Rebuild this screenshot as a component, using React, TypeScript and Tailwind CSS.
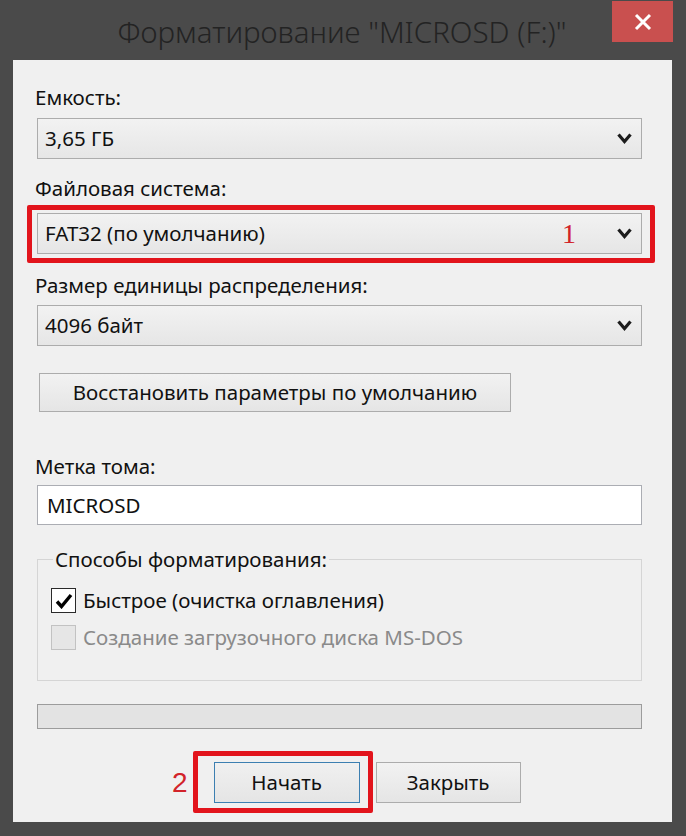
import { type ReactNode } from "react";

const font = { fontFamily: '"Noto Sans", "Open Sans", sans-serif' };

function Chevron() {
  return (
    <svg width="15" height="11" viewBox="0 0 15 11" className="shrink-0">
      <path d="M1.5 1.5 L7.5 8.5 L13.5 1.5" fill="none" stroke="#1c1c1c" strokeWidth="3.2" strokeLinejoin="miter" />
    </svg>
  );
}

function Combo({ value, children }: { value: string; children?: ReactNode }) {
  return (
    <div className="flex h-[41px] w-[605px] items-center border border-[#acacac] bg-gradient-to-b from-[#f2f2f2] to-[#e6e6e6] pl-[7px] pr-[9px]">
      <span className="flex-1 text-[20.5px] text-[#111]">{value}</span>
      {children}
      <Chevron />
    </div>
  );
}

function Label({ text, className = "" }: { text: string; className?: string }) {
  return <div className={`h-[24px] text-[20.5px] leading-[24px] text-[#111] ${className}`}>{text}</div>;
}

export default function App() {
  return (
    <div className="flex h-[836px] w-[686px] flex-col bg-[#4a4a4a]" style={font}>
      {/* Title bar */}
      <div className="flex h-[60px] items-start">
        <div className="flex h-[58px] flex-1 items-center justify-center pl-[72px] pt-[6px] text-[29.5px] font-light text-[#232323]">
          Форматирование "MICROSD (F:)"
        </div>
        <button className="mr-[13px] mt-[1px] flex h-[41px] w-[61px] items-center justify-center bg-[#c9504f]">
          <svg width="18" height="18" viewBox="0 0 18 18">
            <path d="M2 2 L16 16 M16 2 L2 16" stroke="#fff" strokeWidth="3" />
          </svg>
        </button>
      </div>

      {/* Client area */}
      <div className="mx-[13px] flex h-[762px] w-[659px] flex-col bg-[#f0f0f0] pl-[24px]">
        <Label text="Емкость:" className="mt-[25px] -ml-[2px]" />
        <div className="mt-[9px]">
          <Combo value="3,65 ГБ" />
        </div>

        <Label text="Файловая система:" className="mt-[17px] -ml-[2px]" />
        <div className="relative mt-[13px] w-[605px]">
          <Combo value="FAT32 (по умолчанию)">
            <span className="mr-[41px] text-[28px] leading-none text-[#d2232a]" style={{ fontFamily: '"Liberation Serif", serif' }}>
              1
            </span>
          </Combo>
          <div className="pointer-events-none absolute -bottom-[9px] -left-[10px] -right-[13px] -top-[8px] rounded-[2px] border-[5px] border-[#e2141c]" />
        </div>

        <Label text="Размер единицы распределения:" className="mt-[19px] -ml-[2px]" />
        <div className="mt-[8px]">
          <Combo value="4096 байт" />
        </div>

        <button className="ml-[2px] mt-[27px] flex h-[39px] w-[472px] items-center justify-center border border-[#acacac] bg-gradient-to-b from-[#f2f2f2] to-[#e5e5e5] text-[20.5px] text-[#111]">
          Восстановить параметры по умолчанию
        </button>

        <Label text="Метка тома:" className="mt-[42px] -ml-[2px]" />
        <div className="mt-[7px] flex h-[40px] w-[605px] items-center border border-[#abadb3] bg-white pl-[9px] text-[20.5px] text-[#111]">
          MICROSD
        </div>

        <fieldset className="mt-[22px] h-[134px] w-[605px] border border-[#d5d5d5] pl-[13px] pt-0">
          <legend className="ml-[2px] px-[2px] text-[20.5px] leading-[24px] text-[#111]">Способы форматирования:</legend>
          <div className="mt-[17px] flex h-[25px] items-center gap-[7px]">
            <div className="flex h-[25px] w-[25px] items-center justify-center border-[1.5px] border-[#2a2a2a] bg-white">
              <svg width="18" height="16" viewBox="0 0 18 16">
                <path d="M2 8.5 L6.5 13.5 L16 2" fill="none" stroke="#000" strokeWidth="3.4" />
              </svg>
            </div>
            <span className="text-[20.5px] leading-[25px] text-[#111]">Быстрое (очистка оглавления)</span>
          </div>
          <div className="mt-[12px] flex h-[25px] items-center gap-[7px]">
            <div className="h-[25px] w-[25px] border border-[#c2c2c2] bg-[#e6e6e6]" />
            <span className="text-[20.5px] leading-[25px] text-[#8a8a8a]">Создание загрузочного диска MS-DOS</span>
          </div>
        </fieldset>

        {/* Progress bar */}
        <div className="mt-[23px] h-[25px] w-[605px] border border-[#9c9c9c] bg-[#e3e3e3]" />

        {/* Buttons */}
        <div className="mt-[33px] flex items-center">
          <span className="ml-[135px] text-[28px] leading-none text-[#d2232a]" style={{ fontFamily: '"Liberation Sans", sans-serif' }}>
            2
          </span>
          <div className="relative ml-[26px]">
            <button className="flex h-[41px] w-[146px] items-center justify-center border border-[#3c7fb1] bg-gradient-to-b from-[#f0f0f0] to-[#e5e5e5] text-[20.5px] text-[#111]">
              Начать
            </button>
            <div className="pointer-events-none absolute -bottom-[10px] -left-[21px] -right-[13px] -top-[11px] rounded-[2px] border-[5px] border-[#e2141c]" />
          </div>
          <button className="ml-[16px] flex h-[41px] w-[145px] items-center justify-center border border-[#acacac] bg-gradient-to-b from-[#f2f2f2] to-[#e5e5e5] text-[20.5px] text-[#111]">
            Закрыть
          </button>
        </div>
      </div>
    </div>
  );
}
